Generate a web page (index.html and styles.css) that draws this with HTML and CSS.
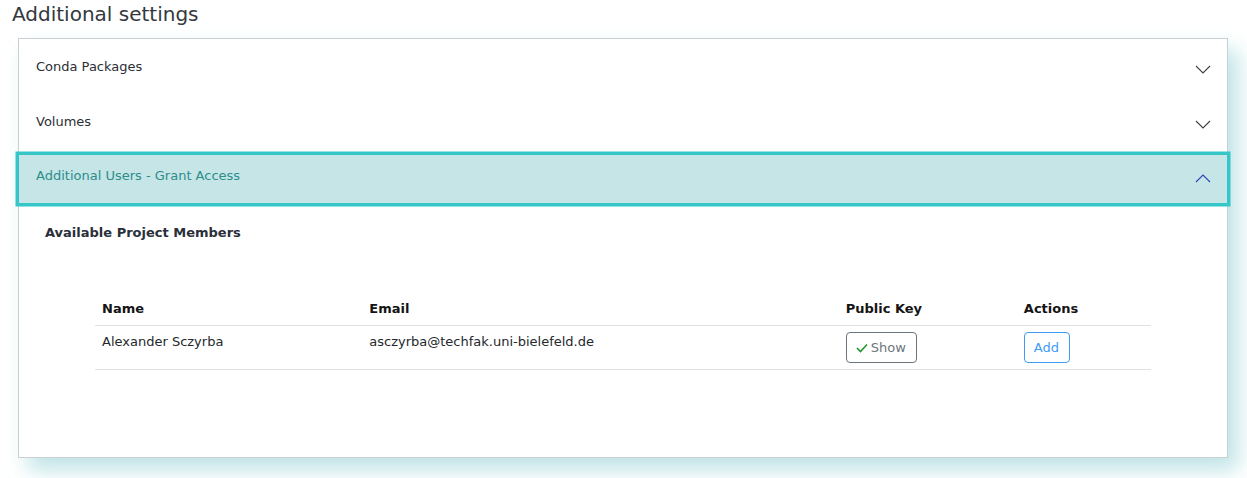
FILE: index.html
```html
<!DOCTYPE html>
<html lang="en">
<head>
<meta charset="utf-8">
<title>Additional settings</title>
<link rel="stylesheet" href="styles.css">
</head>
<body>
<div class="page">
  <h2 class="title">Additional settings</h2>
  <div class="card">
    <div class="acc-item">
      <div class="acc-header">
        <span>Conda Packages</span>
        <svg class="chev" width="16" height="9" viewBox="0 0 16 9"><polyline points="1,1 8,8 15,1" fill="none" stroke="#3a3f44" stroke-width="1.1"/></svg>
      </div>
    </div>
    <div class="acc-item">
      <div class="acc-header">
        <span>Volumes</span>
        <svg class="chev" width="16" height="9" viewBox="0 0 16 9"><polyline points="1,1 8,8 15,1" fill="none" stroke="#3a3f44" stroke-width="1.1"/></svg>
      </div>
    </div>
    <div class="acc-item open">
      <div class="acc-header active">
        <span>Additional Users - Grant Access</span>
        <svg class="chev up" width="16" height="9" viewBox="0 0 16 9"><polyline points="1,8 8,1 15,8" fill="none" stroke="#3041b8" stroke-width="1.1"/></svg>
      </div>
      <div class="acc-body">
        <h4 class="sub">Available Project Members</h4>
        <div class="table-wrap">
          <table class="members">
            <colgroup>
              <col class="c-name"><col class="c-email"><col class="c-key"><col class="c-act">
            </colgroup>
            <thead>
              <tr><th>Name</th><th>Email</th><th>Public Key</th><th>Actions</th></tr>
            </thead>
            <tbody>
              <tr>
                <td>Alexander Sczyrba</td>
                <td>asczyrba@techfak.uni-bielefeld.de</td>
                <td><button class="btn btn-show"><svg width="12" height="10" viewBox="0 0 12 10"><polyline points="1,5 4.5,8.5 11,1.5" fill="none" stroke="#1f9a2a" stroke-width="1.6"/></svg>Show</button></td>
                <td><button class="btn btn-add">Add</button></td>
              </tr>
            </tbody>
          </table>
        </div>
      </div>
    </div>
  </div>
</div>
</body>
</html>
```
FILE: styles.css
```css
* { box-sizing: border-box; }
html, body { margin: 0; padding: 0; background: #fff; }
body {
  font-family: "DejaVu Sans", "Liberation Sans", sans-serif;
  color: #23282c;
  width: 1247px;
  height: 478px;
  overflow: hidden;
}
.page {
  padding: 2px 20px 0 18px;
}
.title {
  margin: 0 0 12px -6px;
  font-size: 20px;
  line-height: 24px;
  font-weight: normal;
  color: #33383d;
}
.card {
  width: 1210px;
  height: 420px;
  border: 1px solid #c9d0d4;
  background: #fff;
  box-shadow: 10px 12px 20px rgba(95, 185, 192, 0.4);
}
.acc-header {
  display: flex;
  justify-content: space-between;
  align-items: center;
  height: 55px;
  padding: 1px 16px 0 17px;
  font-size: 13px;
  line-height: 18px;
  color: #2a2f34;
}
.chev { margin-top: 5px; }
.acc-item.open { padding-top: 6px; }
.acc-header.active {
  height: 48px;
  padding: 2px 16px 8px 17px;
  background: #c5e5e6;
  color: #2d8d8c;
  box-shadow: 0 0 0 3.5px #35c6c8;
  position: relative;
}
.acc-header.active .chev { margin-top: 4px; }
.acc-body {
  padding: 21px 26px 0 26px;
}
.sub {
  margin: 0;
  font-size: 13px;
  line-height: 18px;
  font-weight: bold;
  color: #2a2f3a;
}
.table-wrap {
  padding: 51px 50px 0 50px;
}
.members {
  width: 100%;
  table-layout: fixed;
  border-collapse: collapse;
  font-size: 13px;
  line-height: 18px;
}
.c-name { width: 267px; }
.c-email { width: 476px; }
.c-key { width: 178px; }
.c-act { width: 134px; }
.members th {
  text-align: left;
  font-weight: bold;
  color: #141414;
  padding: 7px 7px 7px 7px;
  border-bottom: 1px solid #dde2e7;
}
.members td {
  vertical-align: top;
  padding: 7px 7px 6px 7px;
  border-bottom: 1px solid #dde2e7;
  color: #23282c;
}
.btn {
  display: inline-flex;
  align-items: center;
  gap: 3px;
  height: 31px;
  margin-top: -1px;
  font-family: "DejaVu Sans", "Liberation Sans", sans-serif;
  font-size: 13px;
  background: #fff;
  border-radius: 4px;
  cursor: pointer;
}
.btn-show {
  padding: 0 10px 0 9px;
  border: 1px solid #6d757c;
  color: #6d757c;
}
.btn-add {
  padding: 0 10px 0 9px;
  border: 1px solid #3e9cf4;
  color: #3e9cf4;
}
```
